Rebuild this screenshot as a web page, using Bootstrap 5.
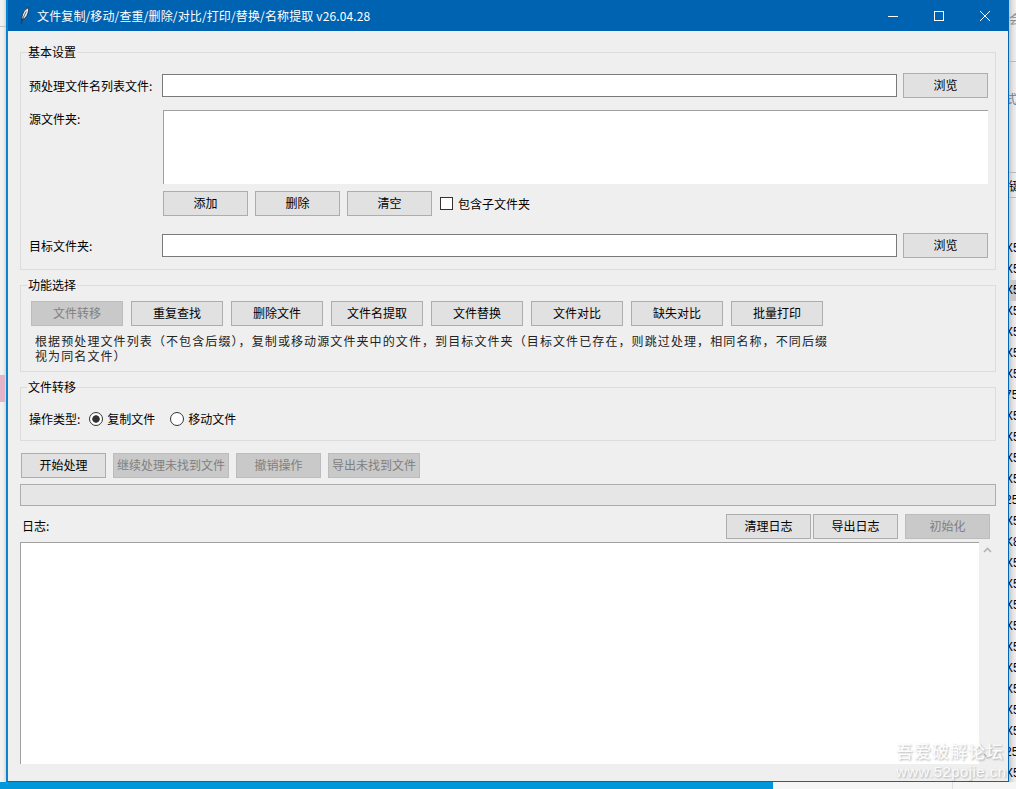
<!DOCTYPE html>
<html lang="zh-CN">
<head>
  <meta charset="UTF-8">
  <title>文件复制/移动/查重/删除/对比/打印/替换/名称提取 v26.04.28</title>
  <link href="https://cdn.jsdelivr.net/npm/bootstrap@5.3.0/dist/css/bootstrap.min.css" rel="stylesheet">
  <style>
    html, body { height: 100%; }
    body {
      background: #ececec;
      font-family: "Noto Sans CJK SC", "Liberation Sans", sans-serif;
      font-size: 12px;
      line-height: 16px;
      color: #000;
      overflow: hidden;
    }
    .desk { position: relative; width: 1016px; height: 789px; overflow: hidden; background: linear-gradient(90deg, #f2f2f2 0, #f0f0f0 3px, #d6d6d6 6px); }
    .desk-blue { position: absolute; left: 0; top: 782px; width: 773px; height: 7px; background: #0097da; }
    .desk-white { position: absolute; left: 773px; top: 782px; width: 243px; height: 7px; background: #f5f5f5; }
    .desk-line { position: absolute; left: 952px; top: 782px; width: 1px; height: 7px; background: #dedede; }
    .desk-pink { position: absolute; left: 0; top: 375px; width: 5px; height: 27px; background: #e3b4c8; }
    .desk-rule { position: absolute; left: 0; top: 26px; width: 6px; height: 1px; background: #c4c4c4; }
    .back-app { position: absolute; left: 1009px; top: 0; width: 7px; height: 782px; background: linear-gradient(90deg, #c6c6c6 0, #e4e4e4 4px, #efefef 7px); overflow: hidden; }
    .back-rows { padding-top: 238px; }
    .back-rows div { height: 21px; line-height: 21px; margin-left: -4px; padding-left: 0; white-space: nowrap; font-family: "Liberation Sans", sans-serif; font-size: 12px; }
    .back-rows .picked { background: #c8c8c8; }
    .back-glyph { position: absolute; left: 0; white-space: nowrap; font-size: 12px; }
    .back-g1 { top: 11px; color: #8a8a8a; }
    .back-g2 { top: 91px; left: -4px; color: #5f7f9a; }
    .back-g3 { top: 178px; color: #000; }
    .back-rule { position: absolute; left: 0; width: 7px; height: 1px; background: #b8b8b8; }
    .back-r1 { top: 61px; }
    .back-r2 { top: 172px; }
    .back-r3 { top: 197px; }
    .app-win {
      position: absolute; left: 6px; top: 0; width: 1003px; height: 782px;
      background: #efefef; border: 1px solid #0067b8; border-left: 2px solid #0a84d0; border-top: 0;
    }
    .app-title { height: 31px; background: #0063b1; color: #fff; padding-left: 12px; flex: none; }
    .app-title .name { margin-left: 8px; white-space: nowrap; letter-spacing: .13px; }
    .win-ctl { width: 46px; height: 30px; }
    .app-body { padding: 13px 12px 0 12px; }
    fieldset.grp { border: 1px solid #dcdcdc; padding: 0; margin: 0; }
    fieldset.grp + fieldset.grp { margin-top: 7px; }
    fieldset.grp legend { float: none; width: auto; font-size: 12px; line-height: 16px; margin: 0 0 0 6px; padding: 0 1px; }
    .grp-a { padding: 13px 7px 11px 8px; }
    .grp-b { padding: 8px 0 8px 10px; }
    .grp-c { padding: 16px 8px 13px 8px; }
    .fld-label { width: 133px; flex: none; white-space: nowrap; }
    .fld-top { padding-top: 1px; }
    .fld-input {
      width: 735px; height: 23px; flex: none; background: #fff; border: 1px solid #7a7a7a;
      border-radius: 0; padding: 0 2px; font-size: 12px;
    }
    .fld-input:focus { outline: 0; box-shadow: none; }
    .src-list { width: 825px; height: 74px; flex: none; margin-left: 1px; background: #fff; border-top: 1px solid #a0a0a0; border-left: 1px solid #a0a0a0; }
    .btn.tk-btn {
      height: 25px; padding: 0 0 2px; flex: none; font-size: 12px; line-height: 21px; color: #000;
      background: #e1e1e1; border: 1px solid #adadad; border-radius: 0; opacity: 1;
    }
    .btn.tk-btn:disabled { background: #c9c9c9; border-color: #bcbcbc; color: #808080; opacity: 1; }
    .w85 { width: 85px; }
    .w92 { width: 92px; }
    .w116 { width: 116px; }
    .src-btns { margin: 7px 0 17px 134px; }
    .form-check-input.tk-check { width: 13px; height: 13px; margin: 0; border: 1px solid #333; border-radius: 0; background: #fff; flex: none; }
    .form-check-input.tk-radio { width: 14px; height: 14px; margin: 0; border: 1px solid #333; background: #fff; flex: none; }
    .form-check-input.tk-radio:checked { background-color: #fff; border-color: #333; background-image: radial-gradient(circle, #333 0 3.4px, transparent 4px); }
    .gap-left { margin-left: 7px; }
    .gap-small { margin-left: 2px; }
    .form-check-input.gap-check { margin-left: 8px; }
    .check-text { margin-left: 5px; }
    .radio-text { margin-left: 4px; }
    .form-check-input.radio-first { margin-left: 9px; }
    .form-check-input.radio-next { margin-left: 15px; }
    .func-row { gap: 8px; }
    .flex-none { flex: none; }
    .desc-text { margin: 7px 0 0 4px; width: 810px; line-height: 15px; letter-spacing: 1.1px; color: #222; }
    .run-row { margin: 12px 0 0 1px; }
    .bar-slot { height: 22px; margin-top: 6px; background: #e6e6e6; border: 1px solid #adadad; }
    .log-head { margin-top: 8px; padding: 0 6px 0 2px; }
    .log-head span { margin-top: -1px; }
    .log-main { margin-top: 3px; height: 222px; }
    .log-box { width: 959px; background: #fff; border-top: 1px solid #a0a0a0; border-left: 1px solid #a0a0a0; }
    .log-scroll { width: 17px; padding: 5px 0; }
    .water {
      position: absolute; left: 896px; top: 739px; width: 113px; color: #fbfbfb;
      text-shadow: 1px 1px 2px rgba(0,0,0,.28); white-space: nowrap;
    }
    .water .w1 { font-size: 17px; line-height: 24px; letter-spacing: 1px; font-weight: 500; }
    .water .w2 { font-size: 15px; line-height: 18px; letter-spacing: .45px; font-family: "Liberation Sans", sans-serif; }
  </style>
</head>
<body>
  <div class="desk">
    <div class="desk-blue"></div>
    <div class="desk-white"></div>
    <div class="desk-line"></div>
    <div class="desk-pink"></div>
    <div class="desk-rule"></div>

    <div class="back-app">
      <div class="back-glyph back-g1">会</div>
      <div class="back-rule back-r1"></div>
      <div class="back-glyph back-g2">式</div>
      <div class="back-rule back-r2"></div>
      <div class="back-glyph back-g3">键</div>
      <div class="back-rule back-r3"></div>
      <div class="back-rows" id="backRows"></div>
    </div>

    <div class="app-win d-flex flex-column">
      <div class="app-title d-flex align-items-center">
        <svg width="9" height="17" viewBox="0 0 9 17" class="flex-none">
          <path d="M1 16.5 L2 10 C2.4 6 5 2 8.6 .6 C8.9 4 7.8 8 5.6 10.4 C4.6 11.5 3.2 12 2.4 12 L1.6 16.5 Z" fill="#e6f0fa" stroke="#1b2530" stroke-width=".8"/>
          <path d="M2.2 13 L6.2 4.5" stroke="#1b2530" stroke-width=".7" fill="none"/>
        </svg>
        <span class="name">文件复制/移动/查重/删除/对比/打印/替换/名称提取 v26.04.28</span>
        <div class="ms-auto d-flex">
          <div class="win-ctl d-flex align-items-center justify-content-center">
            <svg width="10" height="10" viewBox="0 0 10 10"><path d="M0 5.5H10" stroke="#fff"/></svg>
          </div>
          <div class="win-ctl d-flex align-items-center justify-content-center">
            <svg width="10" height="10" viewBox="0 0 10 10"><rect x=".5" y=".5" width="9" height="9" fill="none" stroke="#fff"/></svg>
          </div>
          <div class="win-ctl d-flex align-items-center justify-content-center">
            <svg width="10" height="10" viewBox="0 0 10 10"><path d="M0 0L10 10M10 0L0 10" stroke="#fff"/></svg>
          </div>
        </div>
      </div>

      <div class="app-body">
        <fieldset class="grp">
          <legend>基本设置</legend>
          <div class="grp-a">
            <div class="d-flex align-items-center">
              <div class="fld-label">预处理文件名列表文件:</div>
              <input class="fld-input" type="text">
              <button class="btn tk-btn w85 ms-auto" type="button">浏览</button>
            </div>
            <div class="d-flex mt-2 pt-1">
              <div class="fld-label fld-top">源文件夹:</div>
              <div class="src-list"></div>
            </div>
            <div class="src-btns d-flex align-items-center">
              <button class="btn tk-btn w85" type="button">添加</button>
              <button class="btn tk-btn w85 gap-left" type="button">删除</button>
              <button class="btn tk-btn w85 gap-left" type="button">清空</button>
              <input class="form-check-input tk-check gap-check" type="checkbox" id="subDirs">
              <label class="check-text" for="subDirs">包含子文件夹</label>
            </div>
            <div class="d-flex align-items-center">
              <div class="fld-label">目标文件夹:</div>
              <input class="fld-input" type="text">
              <button class="btn tk-btn w85 ms-auto" type="button">浏览</button>
            </div>
          </div>
        </fieldset>

        <fieldset class="grp">
          <legend>功能选择</legend>
          <div class="grp-b">
            <div class="d-flex func-row">
              <button class="btn tk-btn w92" type="button" disabled>文件转移</button>
              <button class="btn tk-btn w92" type="button">重复查找</button>
              <button class="btn tk-btn w92" type="button">删除文件</button>
              <button class="btn tk-btn w92" type="button">文件名提取</button>
              <button class="btn tk-btn w92" type="button">文件替换</button>
              <button class="btn tk-btn w92" type="button">文件对比</button>
              <button class="btn tk-btn w92" type="button">缺失对比</button>
              <button class="btn tk-btn w92" type="button">批量打印</button>
            </div>
            <div class="desc-text">根据预处理文件列表（不包含后缀），复制或移动源文件夹中的文件，到目标文件夹（目标文件已存在，则跳过处理，相同名称，不同后缀<br>视为同名文件）</div>
          </div>
        </fieldset>

        <fieldset class="grp">
          <legend>文件转移</legend>
          <div class="grp-c">
            <div class="d-flex align-items-center">
              <span>操作类型:</span>
              <input class="form-check-input tk-radio radio-first" type="radio" name="opType" id="opCopy" checked>
              <label class="radio-text" for="opCopy">复制文件</label>
              <input class="form-check-input tk-radio radio-next" type="radio" name="opType" id="opMove">
              <label class="radio-text" for="opMove">移动文件</label>
            </div>
          </div>
        </fieldset>

        <div class="run-row d-flex">
          <button class="btn tk-btn w85" type="button">开始处理</button>
          <button class="btn tk-btn w116 gap-left" type="button" disabled>继续处理未找到文件</button>
          <button class="btn tk-btn w85 gap-left" type="button" disabled>撤销操作</button>
          <button class="btn tk-btn w92 gap-left" type="button" disabled>导出未找到文件</button>
        </div>

        <div class="bar-slot"></div>

        <div class="log-head d-flex align-items-center">
          <span>日志:</span>
          <button class="btn tk-btn w85 ms-auto" type="button">清理日志</button>
          <button class="btn tk-btn w85 gap-small" type="button">导出日志</button>
          <button class="btn tk-btn w85 gap-left" type="button" disabled>初始化</button>
        </div>

        <div class="log-main d-flex">
          <div class="log-box"></div>
          <div class="log-scroll d-flex flex-column align-items-center justify-content-between">
            <svg width="9" height="6" viewBox="0 0 9 6"><path d="M1 5L4.5 1.5L8 5" fill="none" stroke="#b4b4b4" stroke-width="1.6"/></svg>
            <svg width="9" height="6" viewBox="0 0 9 6"><path d="M1 1L4.5 4.5L8 1" fill="none" stroke="#b4b4b4" stroke-width="1.6"/></svg>
          </div>
        </div>
      </div>
    </div>

    <div class="water">
      <div class="w1">吾爱破解论坛</div>
      <div class="w2">www.52pojie.cn</div>
    </div>
  </div>

  <script>
    // rows of the window behind, only the first characters show
    const rows = ['X5','X5','X5','X5','X5','X5','X5','75','X5','X5','X5','X5','25','X5','K8','X5','X5','X5','X5','X5','X5','X5','X5','X5','25','X5'];
    const box = document.getElementById('backRows');
    rows.forEach((t, i) => {
      const d = document.createElement('div');
      d.textContent = t;
      if (i === 2) d.className = 'picked';
      box.appendChild(d);
    });
  </script>
</body>
</html>
